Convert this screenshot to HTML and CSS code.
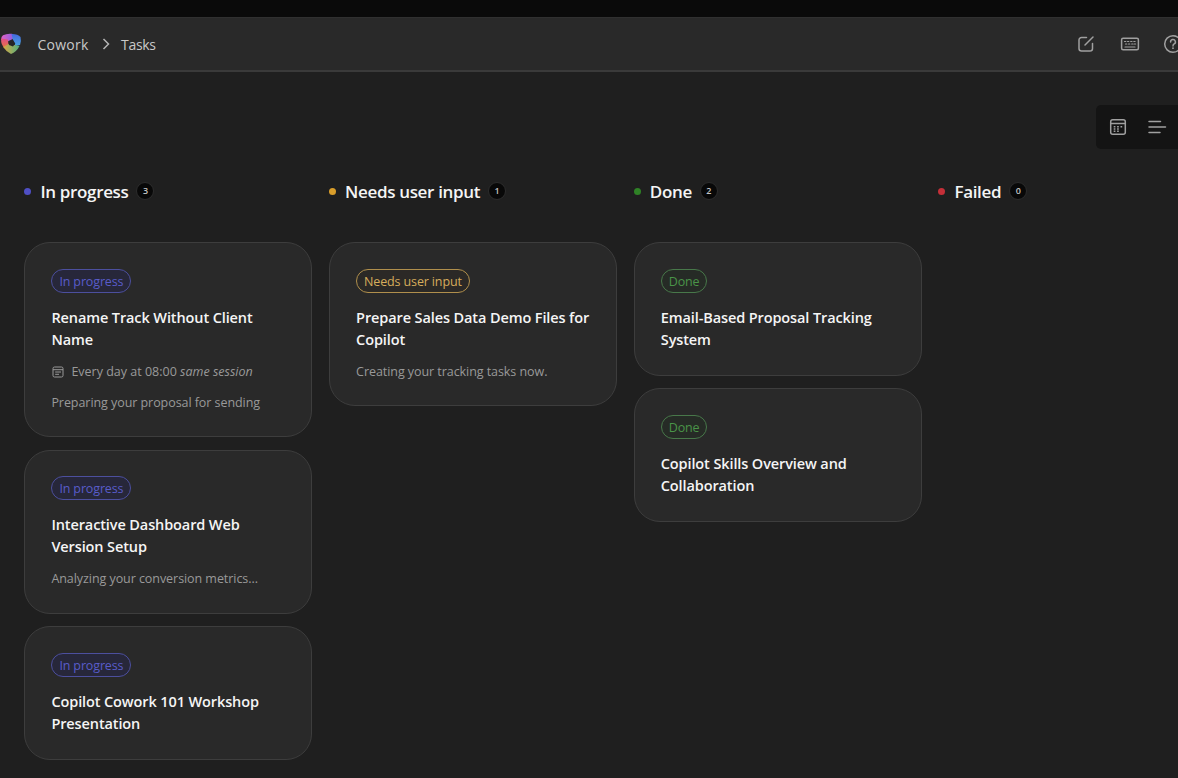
FILE: index.html
```html
<!DOCTYPE html>
<html lang="en">
<head>
<meta charset="utf-8">
<title>Cowork Tasks</title>
<link rel="stylesheet" href="styles.css">
</head>
<body>
<div class="window-strip"></div>
<header class="topbar">
  <nav class="crumbs">
    <svg class="logo" width="22" height="22" viewBox="0 0 22 22">
      <defs>
        <linearGradient id="top" x1="0" y1="0" x2="1" y2="0"><stop offset="0" stop-color="#e062c4"/><stop offset="1" stop-color="#8a5de0"/></linearGradient>
        <linearGradient id="right" x1="0" y1="0" x2="0" y2="1"><stop offset="0" stop-color="#4468e0"/><stop offset="1" stop-color="#48a5de"/></linearGradient>
        <linearGradient id="left" x1="0" y1="0" x2="0" y2="1"><stop offset="0" stop-color="#e04f86"/><stop offset="1" stop-color="#e8753f"/></linearGradient>
        <linearGradient id="bottom" x1="0" y1="0" x2="1" y2="0"><stop offset="0" stop-color="#d9a943"/><stop offset="1" stop-color="#4fb080"/></linearGradient>
      </defs>
      <path d="M3 2.2Q7 .2 12 .8Q14.500 2 13.500 5.500L8 8.500L1.200 7Q1 3.500 3 2.200Z" fill="url(#top)"/>
      <path d="M11.500 .9Q18 .8 20.500 4Q21.500 8 20 12L15.500 13L13 7Z" fill="url(#right)"/>
      <path d="M1.200 5.500L8 6.500L8.500 11L5 15.500Q.6 12 1.200 5.500Z" fill="url(#left)"/>
      <path d="M8.500 11L14.500 12L19.500 13Q16.500 19 11 21Q6.500 19 3.200 14Z" fill="url(#bottom)"/>
      <path d="M8.500 8L13 7L15.300 10.500L13 13.500L9 12Z" fill="#242527"/>
    </svg>
    <span class="crumb crumb-home">Cowork</span>
    <svg class="chevron" width="8" height="12" viewBox="0 0 8 12"><path d="M1.500 1L6.500 6L1.500 11"/></svg>
    <span class="crumb crumb-page">Tasks</span>
  </nav>
  <div class="actions">
    <svg class="icon" width="18" height="18" viewBox="0 0 18 18"><path d="M9.500 2.500H4.500A2.500 2.500 0 0 0 2 5V13.500A2.500 2.500 0 0 0 4.500 16H13A2.500 2.500 0 0 0 15.500 13.500V8.500M8 10L16 2"/></svg>
    <svg class="icon" width="20" height="18" viewBox="0 0 20 18"><rect x="1.600" y="3.200" width="16.800" height="11.600" rx="1.500"/><path class="thin" d="M4.500 6.500h1.300M7.500 6.500h1.300M10.700 6.500h1.300M13.800 6.500h1.300M5.500 9h1.300M8.500 9h1.300M11.700 9h1.300M14.300 9h1.300M5 12h10"/></svg>
    <svg class="icon help" width="20" height="20" viewBox="0 0 20 20"><circle cx="10" cy="10" r="8.300"/><path d="M7.600 8A2.400 2.400 0 1 1 11.200 9.900Q10 10.600 10 11.900"/><circle class="solid" cx="10" cy="14.200" r=".9"/></svg>
  </div>
</header>
<main>
  <div class="toolbar">
    <div class="view-switch">
      <svg class="icon" width="18" height="18" viewBox="0 0 18 18"><rect x="1.700" y="1.700" width="14.600" height="14.600" rx="2"/><path d="M2 5.500H16"/><path class="dots" d="M4.700 8.700h1.700M8.100 8.700h1.700M11.500 8.700h1.700M4.700 11h1.700M8.100 11h1.700M4.700 13.300h1.700M8.100 13.300h1.700"/></svg>
      <svg class="icon" width="20" height="16" viewBox="0 0 20 16"><path d="M2 2.500H13.500M2 8H18.500M2 13.500H13"/></svg>
    </div>
  </div>
  <div class="board">
    <section class="column progress">
      <h2 class="column-head"><i class="dot"></i><span class="head-label">In progress</span><b class="count">3</b></h2>
      <article class="card">
        <span class="tag">In progress</span>
        <h3 class="title">Rename Track Without Client<br>Name</h3>
        <p class="note schedule"><svg class="icon-small" width="12" height="12" viewBox="0 0 12 12"><rect x="1" y="1" width="10" height="10" rx="1.500"/><path d="M1 3.700H11M3.200 6H9M3.200 8.300H7"/></svg><span>Every day at 08:00 <em>same session</em></span></p>
        <p class="note">Preparing your proposal for sending</p>
      </article>
      <article class="card">
        <span class="tag">In progress</span>
        <h3 class="title">Interactive Dashboard Web<br>Version Setup</h3>
        <p class="note">Analyzing your conversion metrics...</p>
      </article>
      <article class="card">
        <span class="tag">In progress</span>
        <h3 class="title">Copilot Cowork 101 Workshop<br>Presentation</h3>
      </article>
    </section>
    <section class="column waiting">
      <h2 class="column-head"><i class="dot"></i><span class="head-label">Needs user input</span><b class="count">1</b></h2>
      <article class="card">
        <span class="tag">Needs user input</span>
        <h3 class="title">Prepare Sales Data Demo Files for<br>Copilot</h3>
        <p class="note">Creating your tracking tasks now.</p>
      </article>
    </section>
    <section class="column done">
      <h2 class="column-head"><i class="dot"></i><span class="head-label">Done</span><b class="count">2</b></h2>
      <article class="card">
        <span class="tag">Done</span>
        <h3 class="title">Email-Based Proposal Tracking<br>System</h3>
      </article>
      <article class="card">
        <span class="tag">Done</span>
        <h3 class="title">Copilot Skills Overview and<br>Collaboration</h3>
      </article>
    </section>
    <section class="column failed">
      <h2 class="column-head"><i class="dot"></i><span class="head-label">Failed</span><b class="count">0</b></h2>
    </section>
  </div>
</main>
</body>
</html>
```
FILE: styles.css
```css
* { box-sizing: border-box; }
html, body { height: 100%; overflow: hidden; }
body {
  margin: 0;
  background: #1f1f1f;
  color: #f5f5f5;
  font-family: "Open Sans", "Noto Sans", sans-serif;
}
h2, h3, p { margin: 0; }
svg { display: block; flex: none; fill: none; }

.window-strip { height: 17px; background: #0a0a0a; }
.topbar {
  display: flex;
  justify-content: space-between;
  height: 55px;
  background: #292929;
  border-top: 1px solid #303030;
  border-bottom: 2px solid #3a3a3a;
}
.crumbs { display: flex; align-items: center; height: 52px; }
.crumb { font-size: 14px; color: #c8c8c8; white-space: nowrap; }
.crumb-home { width: 52px; margin-left: 15.500px; letter-spacing: 0.250px; }
.crumb-page { width: 36px; margin-left: 11px; letter-spacing: -0.300px; }
.chevron { margin-left: 12.500px; stroke: #b5b5b5; stroke-width: 1.5; }
.actions { display: flex; align-items: center; gap: 25px; height: 52px; margin-right: -5px; }
.icon { stroke: #a0a0a0; stroke-width: 1.5; stroke-linecap: round; stroke-linejoin: round; }
.help { margin-left: -2px; }
.thin { stroke-width: 1.2; }
.dots { stroke-width: 1.5; stroke-linecap: butt; }
.solid { fill: #a0a0a0; stroke: none; }

.toolbar { display: flex; justify-content: flex-end; padding-top: 33px; }
.view-switch {
  display: flex;
  align-items: center;
  gap: 20px;
  width: 82px;
  height: 44px;
  padding-left: 13px;
  border-radius: 5px 0 0 5px;
  background: #141414;
}

.board {
  display: grid;
  grid-template-columns: repeat(4, 288px);
  column-gap: 16.700px;
  padding: 29px 0 0 24.400px;
}
.column { display: flex; flex-direction: column; gap: 12.500px; }
.column-head {
  display: flex;
  align-items: center;
  height: 26px;
  margin-bottom: 25.500px;
  line-height: 26px;
}
.head-label { margin-left: 9px; padding-top: 1px; font-size: 17px; font-weight: 600; letter-spacing: -0.340px; white-space: nowrap; }
.dot { width: 7px; height: 7px; border-radius: 50%; background: var(--dot); }
.count {
  display: flex;
  align-items: center;
  justify-content: center;
  width: 18px;
  height: 18px;
  margin-left: 8px;
  border: 1px solid #2c2c2c;
  border-radius: 50%;
  background: #080808;
  color: #c4c4c4;
  font-size: 9px;
  font-weight: 600;
}
.card {
  display: flex;
  flex-direction: column;
  align-items: flex-start;
  padding: 25.500px 26px 24px;
  border: 1px solid #3d3d3d;
  border-radius: 26px;
  background: #292929;
}
.tag {
  height: 24px;
  padding: 1px 7px 0;
  border: 1.500px solid var(--line);
  border-radius: 12px;
  color: var(--tag);
  background: var(--tint);
  font-size: 12.500px;
  letter-spacing: -0.140px;
  line-height: 22px;
  white-space: nowrap;
}
.title { margin-top: 14px; font-size: 14.500px; font-weight: 620; letter-spacing: -0.110px; line-height: 22px; white-space: nowrap; }
.note { margin-top: 12px; height: 18px; color: #999; font-size: 12.500px; letter-spacing: -0.060px; line-height: 18px; white-space: nowrap; }
.note + .note { margin-top: 13px; }
.note:last-child { margin-bottom: 0.700px; }
.schedule { display: flex; align-items: center; gap: 7px; padding-left: 1px; letter-spacing: 0; }
.icon-small { stroke: #999; stroke-width: 1; }

.progress { --dot: #4f4fc4; --line: #4c4f9e; --tag: #595cc9; --tint: #27273a; }
.waiting { --dot: #d99e2b; --line: #b08f4c; --tag: #d6ad5c; --tint: #2b2926; }
.done { --dot: #2f8226; --line: #48784a; --tag: #4a9448; --tint: #262b26; }
.failed { --dot: #c42f38; }
```
